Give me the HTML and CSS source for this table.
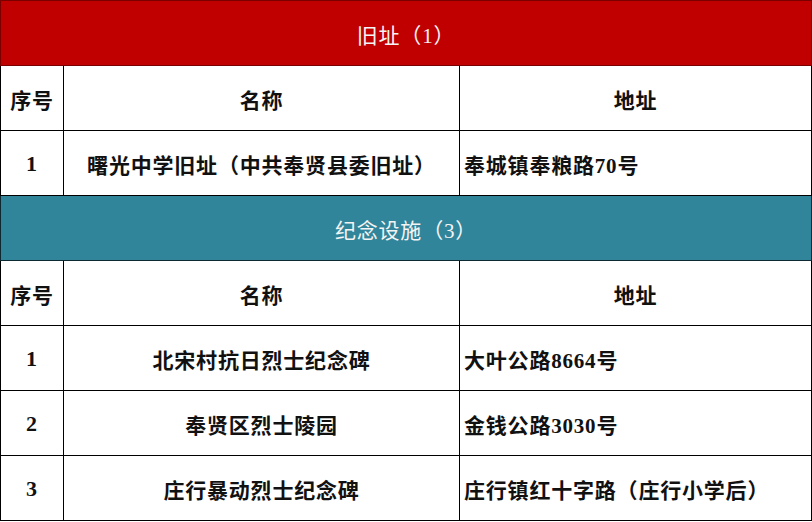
FILE: index.html
```html
<!DOCTYPE html>
<html lang="zh">
<head>
<meta charset="utf-8">
<link rel="stylesheet" href="styles.css">
</head>
<body>
<table class="sites">
  <colgroup>
    <col class="c-no">
    <col class="c-name">
    <col class="c-addr">
  </colgroup>
  <tr class="section red"><td colspan="3">旧址（1）</td></tr>
  <tr class="head"><td>序号</td><td>名称</td><td>地址</td></tr>
  <tr><td class="no">1</td><td class="name">曙光中学旧址（中共奉贤县委旧址）</td><td class="addr">奉城镇奉粮路70号</td></tr>
  <tr class="section teal"><td colspan="3">纪念设施（3）</td></tr>
  <tr class="head"><td>序号</td><td>名称</td><td>地址</td></tr>
  <tr><td class="no">1</td><td class="name">北宋村抗日烈士纪念碑</td><td class="addr">大叶公路8664号</td></tr>
  <tr><td class="no">2</td><td class="name">奉贤区烈士陵园</td><td class="addr">金钱公路3030号</td></tr>
  <tr><td class="no">3</td><td class="name">庄行暴动烈士纪念碑</td><td class="addr">庄行镇红十字路（庄行小学后）</td></tr>
</table>
</body>
</html>
```

FILE: styles.css
```css
html, body {
  margin: 0;
  padding: 0;
  background: #ffffff;
}

.sites {
  border-collapse: collapse;
  width: 811px;
  table-layout: fixed;
  font-family: "Liberation Serif", "Noto Sans CJK SC", serif;
  font-size: 21px;
  font-weight: 600;
  color: #111;
}

.c-no { width: 63px; }
.c-name { width: 396px; }
.c-addr { width: 352px; }

.sites td {
  height: 65px;
  border: 1.5px solid #000;
  padding: 2px 0 0 0;
  text-align: center;
  vertical-align: middle;
  box-sizing: border-box;
  white-space: nowrap;
  letter-spacing: 0.8px;
}

.sites td.addr {
  text-align: left;
  padding-left: 4px;
}

.sites td.no {
  font-size: 22px;
}

.section td {
  color: #f4f4f4;
  font-weight: 400;
  font-size: 21px;
  letter-spacing: 0.8px;
}

.section.red td {
  background: #c00000;
  border-color: #7a0000;
}

.section.teal td {
  background: #31859b;
  border-color: #0d2a33;
}
```
